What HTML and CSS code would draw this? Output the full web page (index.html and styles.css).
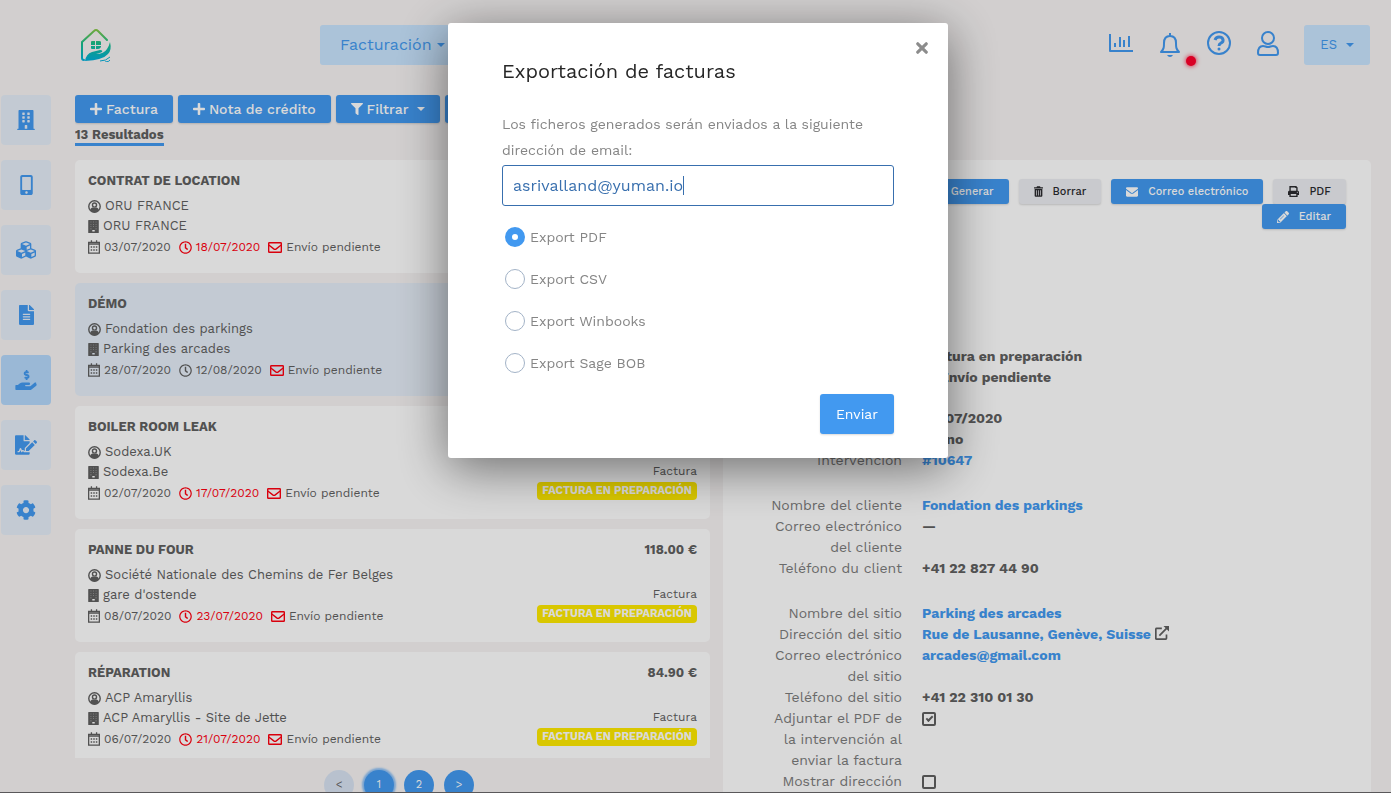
FILE: index.html
```html
<!DOCTYPE html>
<html lang="es">
<head>
  <meta charset="UTF-8" />
  <meta name="viewport" content="width=device-width, initial-scale=1.0" />
  <title>Facturación</title>
  <link rel="stylesheet" href="styles.css">
</head>
<body>
  <!-- icon sprite -->
  <svg class="sprite" aria-hidden="true">
    <symbol id="i-plus" viewBox="0 0 448 512"><path d="M416 208H272V64c0-17.67-14.33-32-32-32h-32c-17.67 0-32 14.33-32 32v144H32c-17.67 0-32 14.33-32 32v32c0 17.67 14.33 32 32 32h144v144c0 17.67 14.33 32 32 32h32c17.67 0 32-14.33 32-32V304h144c17.67 0 32-14.33 32-32v-32c0-17.67-14.33-32-32-32z"/></symbol>
    <symbol id="i-filter" viewBox="0 0 512 512"><path d="M487.976 0H24.028C2.71 0-8.047 25.866 7.058 40.971L192 225.941V432c0 7.831 3.821 15.17 10.237 19.662l80 55.98C298.02 518.69 320 507.493 320 487.98V225.941l184.947-184.97C520.021 25.896 509.338 0 487.976 0z"/></symbol>
    <symbol id="i-building" viewBox="0 0 448 512"><path d="M436 480h-20V24c0-13.255-10.745-24-24-24H56C42.745 0 32 10.745 32 24v456H12c-6.627 0-12 5.373-12 12v20h448v-20c0-6.627-5.373-12-12-12zM128 76c0-6.627 5.373-12 12-12h40c6.627 0 12 5.373 12 12v40c0 6.627-5.373 12-12 12h-40c-6.627 0-12-5.373-12-12V76zm0 96c0-6.627 5.373-12 12-12h40c6.627 0 12 5.373 12 12v40c0 6.627-5.373 12-12 12h-40c-6.627 0-12-5.373-12-12v-40zm52 148h-40c-6.627 0-12-5.373-12-12v-40c0-6.627 5.373-12 12-12h40c6.627 0 12 5.373 12 12v40c0 6.627-5.373 12-12 12zm76 160h-64v-84c0-6.627 5.373-12 12-12h40c6.627 0 12 5.373 12 12v84zm64-172c0 6.627-5.373 12-12 12h-40c-6.627 0-12-5.373-12-12v-40c0-6.627 5.373-12 12-12h40c6.627 0 12 5.373 12 12v40zm0-96c0 6.627-5.373 12-12 12h-40c-6.627 0-12-5.373-12-12v-40c0-6.627 5.373-12 12-12h40c6.627 0 12 5.373 12 12v40zm0-96c0 6.627-5.373 12-12 12h-40c-6.627 0-12-5.373-12-12V76c0-6.627 5.373-12 12-12h40c6.627 0 12 5.373 12 12v40z"/></symbol>
    <symbol id="i-mobile" viewBox="0 0 320 512"><path d="M272 0H48C21.5 0 0 21.5 0 48v416c0 26.5 21.5 48 48 48h224c26.5 0 48-21.5 48-48V48c0-26.5-21.5-48-48-48zM160 480c-17.7 0-32-14.3-32-32s14.3-32 32-32 32 14.3 32 32-14.3 32-32 32zm112-108c0 6.6-5.4 12-12 12H60c-6.6 0-12-5.4-12-12V60c0-6.6 5.4-12 12-12h200c6.6 0 12 5.4 12 12v312z"/></symbol>
    <symbol id="i-cubes" viewBox="0 0 512 512"><path d="M488.6 250.2L392 214V105.5c0-15-9.3-28.4-23.4-33.7l-100-37.5c-8.1-3.1-17.1-3.1-25.3 0l-100 37.5c-14.1 5.3-23.4 18.7-23.4 33.7V214l-96.6 36.2C9.3 255.5 0 268.9 0 283.9V394c0 13.6 7.7 26.1 19.9 32.2l100 50c10.1 5.1 22.1 5.1 32.2 0l103.9-52 103.9 52c10.1 5.1 22.1 5.1 32.2 0l100-50c12.2-6.1 19.9-18.6 19.9-32.2V283.9c0-15-9.3-28.4-23.4-33.7zM358 214.8l-85 31.9v-68.2l85-37v73.3zM154 104.1l102-38.2 102 38.2v.6l-102 41.4-102-41.4v-.6zm84 291.1l-85 42.5v-79.1l85-38.8v75.4zm0-112l-102 41.4-102-41.4v-.6l102-38.2 102 38.2v.6zm240 112l-85 42.5v-79.1l85-38.8v75.4zm0-112l-102 41.4-102-41.4v-.6l102-38.2 102 38.2v.6z"/></symbol>
    <symbol id="i-file" viewBox="0 0 384 512"><path d="M224 136V0H24C10.7 0 0 10.7 0 24v464c0 13.3 10.7 24 24 24h336c13.3 0 24-10.7 24-24V160H248c-13.2 0-24-10.8-24-24zm64 236c0 6.6-5.4 12-12 12H108c-6.6 0-12-5.4-12-12v-8c0-6.6 5.4-12 12-12h168c6.6 0 12 5.4 12 12v8zm0-64c0 6.6-5.4 12-12 12H108c-6.6 0-12-5.4-12-12v-8c0-6.6 5.4-12 12-12h168c6.6 0 12 5.4 12 12v8zm0-72v8c0 6.6-5.4 12-12 12H108c-6.6 0-12-5.4-12-12v-8c0-6.6 5.4-12 12-12h168c6.6 0 12 5.4 12 12zm96-114.1v6.1H256V0h6.1c6.4 0 12.5 2.5 17 7l97.9 98c4.5 4.5 7 10.6 7 16.9z"/></symbol>
    <symbol id="i-hand" viewBox="0 0 544 512"><path d="M257.6 144.3l50 14.3c3.6 1 6.1 4.4 6.1 8.1 0 4.6-3.8 8.4-8.4 8.4h-32.8c-3.6 0-7.1-.8-10.3-2.2-4.8-2.2-10.4-1.7-14.1 2l-17.5 17.5c-5.3 5.3-4.7 14.3 1.5 18.4 9.5 6.3 20.3 10.1 31.8 11.5V240c0 8.8 7.2 16 16 16h16c8.8 0 16-7.2 16-16v-17.6c30.3-3.6 53.3-31 49.3-63-2.9-23-20.7-41.3-42.9-47.7l-50-14.3c-3.6-1-6.1-4.4-6.1-8.1 0-4.6 3.8-8.4 8.4-8.4h32.8c3.6 0 7.1.8 10.3 2.2 4.8 2.2 10.4 1.7 14.1-2l17.5-17.5c5.3-5.3 4.7-14.3-1.5-18.4-9.5-6.3-20.3-10.1-31.8-11.5V16c0-8.8-7.2-16-16-16h-16c-8.8 0-16 7.2-16 16v17.6c-30.3 3.6-53.3 31-49.3 63 2.9 23 20.6 41.3 42.9 47.7z"/><path d="M533 328c-12-11-30-10-43 0l-91 73c-11 9-25 14-40 14H264c-9 0-16-7-16-16s7-16 16-16h78c16 0 31-11 34-27 3-20-12-37-32-37H184c-27 0-53 9-74 26l-47 38H16c-9 0-16 7-16 16v96c0 9 7 16 16 16h357c15 0 29-5 40-14l121-97c15-12 16-35-1-51z"/></symbol>
    <symbol id="i-sign" viewBox="0 0 576 512"><path d="M218.17 424.14c-2.95-5.92-8.09-6.52-10.17-6.52s-7.22.59-10.02 6.19l-7.67 15.34c-6.37 12.78-25.03 11.37-29.48-2.09L144 386.59l-10.61 31.88c-5.89 17.66-22.38 29.53-41 29.53H80c-8.84 0-16-7.16-16-16s7.16-16 16-16h12.39c4.83 0 9.11-3.08 10.64-7.66l18.19-54.64c3.3-9.81 12.44-16.41 22.78-16.41s19.48 6.59 22.77 16.41l13.88 41.64c19.75-16.19 54.06-9.7 66 14.16 1.89 3.78 5.49 5.95 9.36 6.26v-82.12l128-127.09V160H248c-13.2 0-24-10.8-24-24V0H24C10.7 0 0 10.7 0 24v464c0 13.3 10.7 24 24 24h336c13.3 0 24-10.7 24-24v-40l-128-.11c-16.12-.31-30.58-9.28-37.83-23.75zM384 121.9c0-6.3-2.5-12.4-7-16.9L279.1 7c-4.5-4.5-10.6-7-17-7H256v128h128v-6.1zm-96 225.06V416h68.99l161.68-162.78-67.88-67.88L288 346.96zm280.54-179.63l-31.87-31.87c-9.94-9.94-26.07-9.94-36.01 0l-27.25 27.25 67.88 67.88 27.25-27.25c9.95-9.94 9.95-26.07 0-36.01z"/></symbol>
    <symbol id="i-cog" viewBox="0 0 512 512"><path d="M487.4 315.7l-42.6-24.6c4.3-23.2 4.3-47 0-70.2l42.6-24.6c4.9-2.8 7.1-8.6 5.5-14-11.1-35.6-30-67.8-54.7-94.6-3.8-4.1-10-5.1-14.8-2.3L380.8 110c-17.9-15.4-38.5-27.3-60.8-35.1V25.8c0-5.6-3.9-10.5-9.4-11.7-36.7-8.2-74.3-7.8-109.2 0-5.5 1.2-9.4 6.1-9.4 11.7V75c-22.2 7.9-42.8 19.8-60.8 35.1L88.7 85.5c-4.9-2.8-11-1.9-14.8 2.3-24.7 26.7-43.6 58.9-54.7 94.6-1.7 5.4.6 11.2 5.5 14L67.3 221c-4.3 23.2-4.3 47 0 70.2l-42.6 24.6c-4.9 2.8-7.1 8.6-5.5 14 11.1 35.6 30 67.8 54.7 94.6 3.8 4.1 10 5.1 14.8 2.3l42.6-24.6c17.9 15.4 38.5 27.3 60.8 35.1v49.2c0 5.6 3.9 10.5 9.4 11.7 36.7 8.2 74.3 7.8 109.2 0 5.5-1.2 9.4-6.1 9.4-11.7v-49.2c22.2-7.9 42.8-19.8 60.8-35.1l42.6 24.6c4.9 2.8 11 1.9 14.8-2.3 24.7-26.7 43.6-58.9 54.7-94.6 1.5-5.5-.7-11.3-5.6-14.1zM256 336c-44.1 0-80-35.9-80-80s35.9-80 80-80 80 35.9 80 80-35.9 80-80 80z"/></symbol>
    <symbol id="i-client" viewBox="0 0 512 512"><g fill="none" stroke="currentColor" stroke-width="56"><circle cx="256" cy="256" r="225"/><circle cx="256" cy="200" r="80"/></g><path d="M90 390c20-75 70-90 104-90 20 0 30 12 62 12s42-12 62-12c34 0 84 15 104 90-90 120-242 120-332 0z"/></symbol>
    <symbol id="i-site" viewBox="0 0 416 512"><path fill-rule="evenodd" d="M20 0h376q20 0 20 20v472q0 20-20 20H20q-20 0-20-20V20Q0 0 20 0zM96 66v24h24V66zm100 0v24h24V66zm100 0v24h24V66zM96 156v24h24v-24zm100 0v24h24v-24zm100 0v24h24v-24zM96 246v24h24v-24zm100 0v24h24v-24zm100 0v24h24v-24zM96 336v24h24v-24zm200 0v24h24v-24zM160 390v64h96v-64z"/></symbol>
    <symbol id="i-calendar" viewBox="0 0 448 512"><path fill="none" stroke="currentColor" stroke-width="48" d="M24 88h400v400H24zM24 150h400M128 0v88M320 0v88"/><path d="M100 226h56v56h-56zm96 0h56v56h-56zm96 0h56v56h-56zM100 340h56v56h-56zm96 0h56v56h-56zm96 0h56v56h-56z"/></symbol>
    <symbol id="i-clock" viewBox="0 0 512 512"><path d="M256 8C119 8 8 119 8 256s111 248 248 248 248-111 248-248S393 8 256 8zm0 448c-110.500 0-200-89.500-200-200S145.500 56 256 56s200 89.500 200 200-89.500 200-200 200zm61.800-104.400l-84.900-61.700c-3.100-2.300-4.900-5.900-4.900-9.700V116c0-6.600 5.400-12 12-12h32c6.600 0 12 5.400 12 12v141.700l66.800 48.600c5.400 3.900 6.500 11.400 2.600 16.800L334.600 349c-3.900 5.300-11.400 6.500-16.800 2.600z"/></symbol>
    <symbol id="i-mail" viewBox="0 0 512 400"><g fill="none" stroke="currentColor" stroke-width="50"><rect x="25" y="25" width="462" height="350" rx="24"/><path d="M30 110l180 140q46 34 92 0l180-140"/></g></symbol>
    <symbol id="i-mail-solid" viewBox="0 0 512 400"><path d="M48 0h416c26 0 48 21 48 48v18L286 230c-18 14-42 14-60 0L0 66V48C0 21 22 0 48 0zM0 112l200 148c34 26 78 26 112 0l200-148v240c0 27-22 48-48 48H48c-26 0-48-21-48-48z"/></symbol>
    <symbol id="i-trash" viewBox="0 0 448 512"><path fill-rule="evenodd" d="M150 0h148l26 40h108q16 0 16 16v48H0V56q0-16 16-16h108zM32 136h384v328q0 48-48 48H80q-48 0-48-48zm76 56v260h36V192zm98 0v260h36V192zm98 0v260h36V192z"/></symbol>
    <symbol id="i-print" viewBox="0 0 512 512"><path fill-rule="evenodd" d="M64 0h320l64 64v160q64 0 64 64v128h-64v96H64v-96H0V288q0-64 64-64zm64 64v160h256V96h-48V64zm0 304v80h256v-80zM432 272a24 24 0 1 0 1 0z"/></symbol>
    <symbol id="i-pencil" viewBox="0 0 512 512"><path fill-rule="evenodd" d="M497.900 142.100l-46.100 46.100c-4.700 4.700-12.300 4.700-17 0l-111-111c-4.700-4.700-4.700-12.300 0-17l46.100-46.100c18.700-18.700 49.100-18.700 67.900 0l60.100 60.100c18.800 18.700 18.800 49.100 0 67.900zM284.200 99.800L21.600 362.400.4 483.900c-2.900 16.400 11.400 30.600 27.800 27.800l121.500-21.300 262.600-262.600c4.700-4.700 4.700-12.300 0-17l-111-111c-4.800-4.700-12.400-4.700-17.100 0zM130 345l154-154 16 16-154 154zM88 424h48v36.300l-64.500 11.300-31.100-31.100L51.700 376H88v48z"/></symbol>
    <symbol id="i-external" viewBox="0 0 512 512"><path fill="none" stroke="currentColor" stroke-width="62" d="M250 90H60q-30 0-30 30v330q0 30 30 30h330q30 0 30-30V310M160 350L440 70"/><path d="M310 0h202v202z"/></symbol>
    <symbol id="i-close" viewBox="0 0 352 352"><path fill="none" stroke="currentColor" stroke-width="92" stroke-linecap="round" d="M52 52l248 248M300 52L52 300"/></symbol>
  </svg>

  <div class="app">
    <header class="topbar">
      <a class="logo" href="#" aria-label="Inicio">
        <svg class="line" viewBox="0 0 32 34" width="32" height="34">
          <defs>
            <linearGradient id="roof" x1="0" y1="0" x2="0" y2="34" gradientUnits="userSpaceOnUse">
              <stop offset="0" stop-color="#93c83e"/>
              <stop offset=".45" stop-color="#18c08c"/>
              <stop offset="1" stop-color="#00aee0"/>
            </linearGradient>
          </defs>
          <path stroke="url(#roof)" stroke-width="2" stroke-linecap="round" stroke-linejoin="round" d="M4 32q-2 0-2-2V14L14 3q2-2 4 0l9 9"/>
          <path fill="url(#roof)" d="M11 14q0-1 1-1h3v4h-4zM16 13h3q2 0 2 1v3h-5zM11 18h4v3h-3q-1 0-1-1zM16 18h5v1q-1 2-3 2h-2z"/>
          <path fill="url(#roof)" d="M5 33q1-7 7-9l8-2q3 0 2 2-2 1-6 2 8 0 11-5 2-3 3-7 2 8-2 12-5 6-23 7z"/>
          <path stroke="url(#roof)" stroke-width="1" d="M20 33q6 0 10-4M25 34q4 0 5-2"/>
        </svg>
      </a>
      <div class="select module-select">
        <select aria-label="Módulo"><option>Facturación</option></select>
      </div>
      <nav class="top-actions">
        <a href="#" aria-label="Estadísticas"><svg class="line" viewBox="0 0 24 20" width="24" height="20" stroke="currentColor" stroke-width="2"><path d="M1 1v17h23" stroke-linejoin="round"/><path d="M6 14v-4M11 14V4M15 14V7M20 14V3"/></svg></a>
        <a class="bell" href="#" aria-label="Notificaciones"><svg class="line" viewBox="0 0 22 26" width="22" height="26" stroke="currentColor" stroke-width="2"><path d="M2 20h18c-3-3-3-5-3-9 0-4-2-7-6-7s-6 3-6 7c0 4 0 6-3 9zM11 4V1" stroke-linejoin="round"/><path fill="currentColor" stroke="none" d="M8 23h6q-1 2-3 2t-3-2z"/></svg><span class="alert-dot"></span></a>
        <a href="#" aria-label="Ayuda"><svg class="line" viewBox="0 0 24 24" width="24" height="24" stroke="currentColor" stroke-width="2"><circle cx="12" cy="12" r="11"/><path stroke-width="3" d="M8 9q1-3 4-3c5 0 5 5 2 6q-2 1-2 3"/><circle cx="12" cy="18" r="1.500" fill="currentColor" stroke="none"/></svg></a>
        <a href="#" aria-label="Mi cuenta"><svg class="line" viewBox="0 0 22 25" width="22" height="25" stroke="currentColor" stroke-width="2"><circle cx="11" cy="7" r="6"/><path stroke-linejoin="round" d="M1 22c0-5 2-7 5-7 2 0 3 1 5 1s3-1 5-1c3 0 5 2 5 7q0 2-2 2H3q-2 0-2-2z"/></svg></a>
      </nav>
      <div class="select lang-select">
        <select aria-label="Idioma"><option>ES</option></select>
      </div>
    </header>

    <nav class="sidebar">
      <a href="#" aria-label="Sitios"><svg width="18" height="20"><use href="#i-building"/></svg></a>
      <a href="#" aria-label="Equipos"><svg width="13" height="20"><use href="#i-mobile"/></svg></a>
      <a href="#" aria-label="Productos"><svg width="20" height="20"><use href="#i-cubes"/></svg></a>
      <a href="#" aria-label="Intervenciones"><svg width="15" height="20"><use href="#i-file"/></svg></a>
      <a class="active" href="#" aria-label="Facturación"><svg width="22" height="20"><use href="#i-hand"/></svg></a>
      <a href="#" aria-label="Contratos"><svg width="22" height="20"><use href="#i-sign"/></svg></a>
      <a href="#" aria-label="Ajustes"><svg width="20" height="20"><use href="#i-cog"/></svg></a>
    </nav>

    <main class="content">
      <section class="list">
        <div class="toolbar">
          <button class="btn" type="button"><svg width="12" height="14"><use href="#i-plus"/></svg>Factura</button>
          <button class="btn" type="button"><svg width="12" height="14"><use href="#i-plus"/></svg>Nota de crédito</button>
          <button class="btn caret" type="button"><svg width="12" height="12"><use href="#i-filter"/></svg>Filtrar</button>
          <button class="btn" type="button">Exportar</button>
        </div>
        <a class="count" href="#">13 Resultados</a>

        <div class="cards">
          <article class="card">
            <div class="card-main">
              <h2>CONTRAT DE LOCATION</h2>
              <p><svg width="13" height="13"><use href="#i-client"/></svg>ORU FRANCE</p>
              <p><svg width="11" height="13"><use href="#i-site"/></svg>ORU FRANCE</p>
              <p class="dates"><span><svg width="12" height="14"><use href="#i-calendar"/></svg>03/07/2020</span><span class="late"><svg width="13" height="13"><use href="#i-clock"/></svg>18/07/2020</span><span class="sending"><svg width="14" height="11"><use href="#i-mail"/></svg>Envío pendiente</span></p>
            </div>
          </article>

          <article class="card selected">
            <div class="card-main">
              <h2>DÉMO</h2>
              <p><svg width="13" height="13"><use href="#i-client"/></svg>Fondation des parkings</p>
              <p><svg width="11" height="13"><use href="#i-site"/></svg>Parking des arcades</p>
              <p class="dates"><span><svg width="12" height="14"><use href="#i-calendar"/></svg>28/07/2020</span><span><svg width="13" height="13"><use href="#i-clock"/></svg>12/08/2020</span><span class="sending"><svg width="14" height="11"><use href="#i-mail"/></svg>Envío pendiente</span></p>
            </div>
          </article>

          <article class="card">
            <div class="card-main">
              <h2>BOILER ROOM LEAK</h2>
              <p><svg width="13" height="13"><use href="#i-client"/></svg>Sodexa.UK</p>
              <p><svg width="11" height="13"><use href="#i-site"/></svg>Sodexa.Be</p>
              <p class="dates"><span><svg width="12" height="14"><use href="#i-calendar"/></svg>02/07/2020</span><span class="late"><svg width="13" height="13"><use href="#i-clock"/></svg>17/07/2020</span><span class="sending"><svg width="14" height="11"><use href="#i-mail"/></svg>Envío pendiente</span></p>
            </div>
            <div class="card-side">
              <span class="kind">Factura</span>
              <span class="badge">FACTURA EN PREPARACIÓN</span>
            </div>
          </article>

          <article class="card">
            <div class="card-main">
              <h2>PANNE DU FOUR</h2>
              <p><svg width="13" height="13"><use href="#i-client"/></svg>Société Nationale des Chemins de Fer Belges</p>
              <p><svg width="11" height="13"><use href="#i-site"/></svg>gare d'ostende</p>
              <p class="dates"><span><svg width="12" height="14"><use href="#i-calendar"/></svg>08/07/2020</span><span class="late"><svg width="13" height="13"><use href="#i-clock"/></svg>23/07/2020</span><span class="sending"><svg width="14" height="11"><use href="#i-mail"/></svg>Envío pendiente</span></p>
            </div>
            <div class="card-side">
              <strong>118.00 €</strong>
              <span class="kind">Factura</span>
              <span class="badge">FACTURA EN PREPARACIÓN</span>
            </div>
          </article>

          <article class="card">
            <div class="card-main">
              <h2>RÉPARATION</h2>
              <p><svg width="13" height="13"><use href="#i-client"/></svg>ACP Amaryllis</p>
              <p><svg width="11" height="13"><use href="#i-site"/></svg>ACP Amaryllis - Site de Jette</p>
              <p class="dates"><span><svg width="12" height="14"><use href="#i-calendar"/></svg>06/07/2020</span><span class="late"><svg width="13" height="13"><use href="#i-clock"/></svg>21/07/2020</span><span class="sending"><svg width="14" height="11"><use href="#i-mail"/></svg>Envío pendiente</span></p>
            </div>
            <div class="card-side">
              <strong>84.90 €</strong>
              <span class="kind">Factura</span>
              <span class="badge">FACTURA EN PREPARACIÓN</span>
            </div>
          </article>
        </div>

        <nav class="pager" aria-label="Páginas">
          <button type="button" disabled>&lt;</button>
          <button class="current" type="button">1</button>
          <button type="button">2</button>
          <button type="button">&gt;</button>
        </nav>
      </section>

      <section class="detail">
        <div class="detail-actions">
          <button class="btn small" type="button"><svg width="11" height="11"><use href="#i-plus"/></svg>Duplicar</button>
          <button class="btn small" type="button"><svg width="11" height="11"><use href="#i-file"/></svg>Generar</button>
          <button class="btn small light" type="button"><svg width="9" height="11"><use href="#i-trash"/></svg>Borrar</button>
          <button class="btn small" type="button"><svg width="12" height="10"><use href="#i-mail-solid"/></svg>Correo electrónico</button>
          <button class="btn small light" type="button"><svg width="11" height="11"><use href="#i-print"/></svg>PDF</button>
          <button class="btn small" type="button"><svg width="12" height="12"><use href="#i-pencil"/></svg>Editar</button>
        </div>

        <dl class="status">
          <dt>Estado</dt><dd>Factura en preparación</dd>
          <dt>Envío</dt><dd><svg width="14" height="11"><use href="#i-mail"/></svg> Envío pendiente</dd>
        </dl>
        <dl>
          <dt>Fecha</dt><dd>28/07/2020</dd>
          <dt>Autor</dt><dd>Bruno</dd>
          <dt>Intervención</dt><dd><a href="#">#10647</a></dd>
        </dl>
        <dl>
          <dt>Nombre del cliente</dt><dd><a href="#">Fondation des parkings</a></dd>
          <dt>Correo electrónico del cliente</dt><dd>—</dd>
          <dt>Teléfono du client</dt><dd>+41 22 827 44 90</dd>
        </dl>
        <dl>
          <dt>Nombre del sitio</dt><dd><a href="#">Parking des arcades</a></dd>
          <dt>Dirección del sitio</dt><dd><a href="#">Rue de Lausanne, Genève, Suisse</a> <svg width="14" height="14"><use href="#i-external"/></svg></dd>
          <dt>Correo electrónico del sitio</dt><dd><a href="#">arcades@gmail.com</a></dd>
          <dt>Teléfono del sitio</dt><dd>+41 22 310 01 30</dd>
          <dt><label for="attachPdf">Adjuntar el PDF de la intervención al enviar la factura</label></dt><dd><input type="checkbox" id="attachPdf" checked></dd>
          <dt><label for="showAddress">Mostrar dirección</label></dt><dd><input type="checkbox" id="showAddress"></dd>
        </dl>
      </section>
    </main>
  </div>

  <div class="overlay">
    <form class="modal" role="dialog" aria-modal="true" aria-labelledby="modalTitle">
      <button class="close" type="button" aria-label="Cerrar"><svg width="12" height="12"><use href="#i-close"/></svg></button>
      <h1 id="modalTitle">Exportación de facturas</h1>
      <label class="intro" for="email">Los ficheros generados serán enviados a la siguiente dirección de email:</label>
      <div class="field">
        <input type="text" id="email" value="asrivalland@yuman.io">
        <span class="cursor"></span>
      </div>
      <div class="formats">
        <label><input type="radio" name="format" checked>Export PDF</label>
        <label><input type="radio" name="format">Export CSV</label>
        <label><input type="radio" name="format">Export Winbooks</label>
        <label><input type="radio" name="format">Export Sage BOB</label>
      </div>
      <button class="btn submit" type="submit">Enviar</button>
    </form>
  </div>
</body>
</html>
```
FILE: styles.css
```css
* {
  box-sizing: border-box;
}

body {
  margin: 0;
  font-family: "Work Sans", Inter, sans-serif;
  font-size: 14px;
  line-height: 20px;
  color: #606060;
  background: #f7f4f4;
}

h1,
h2,
p,
dl,
dd {
  margin: 0;
}

a {
  color: #4299f0;
  text-decoration: none;
}

button,
input,
select {
  font: inherit;
  color: inherit;
}

svg {
  fill: currentColor;
  flex: none;
}

svg.line {
  fill: none;
}

.sprite {
  display: none;
}

.app {
  display: grid;
  grid-template: 90px 1fr / 75px 1fr;
  height: 100vh;
  overflow: hidden;
  border-bottom: 1px solid #6a686a;
}

/* top bar */

.topbar {
  grid-column: 1 / -1;
  display: flex;
  align-items: flex-start;
  padding: 25px 21px 0 80px;
}

.logo {
  flex: 0 0 240px;
  padding-top: 3px;
}

.select {
  display: flex;
  align-items: center;
  gap: 5px;
  height: 40px;
  border-radius: 3px;
  background: #c9e5ff;
  color: #4299f0;
}

.select select {
  appearance: none;
  field-sizing: content;
  padding: 0;
  border: 0;
  background: none;
}

.select::after,
.caret::after {
  content: "";
  border: 4px solid transparent;
  border-top-color: currentColor;
  border-bottom: 0;
}

.module-select {
  width: 240px;
  padding-left: 20px;
  font-size: 16px;
}

.lang-select {
  gap: 9px;
  padding: 0 16px;
  font-size: 13px;
}

.top-actions {
  display: flex;
  align-items: center;
  gap: 26px;
  height: 36px;
  margin-left: auto;
  margin-right: 25px;
}

.top-actions a {
  display: flex;
}

.bell {
  position: relative;
  padding-top: 4px;
}

.alert-dot {
  position: absolute;
  right: -15px;
  bottom: -8px;
  width: 10px;
  height: 10px;
  border-radius: 50%;
  background: #ff002b;
  box-shadow: 0 0 5px #ff002b;
}

/* sidebar */

.sidebar {
  display: flex;
  flex-direction: column;
  gap: 15px;
  padding: 5px 1px;
}

.sidebar a {
  display: flex;
  align-items: center;
  justify-content: center;
  width: 50px;
  height: 50px;
  border-radius: 4px;
  background: #e6eef8;
}

.sidebar a.active {
  background: #b5d9fc;
}

.content {
  display: grid;
  grid-template-columns: 49fr 50fr;
  gap: 13px;
  min-height: 0;
  padding-right: 20px;
}

/* buttons */

.btn {
  display: flex;
  align-items: center;
  gap: 4px;
  height: 28px;
  padding: 0 15px;
  border: 0;
  border-radius: 3px;
  background: #4299f0;
  box-shadow: 0 1px 2px rgba(0, 0, 0, .15);
  color: #fff;
  white-space: nowrap;
}

.btn.caret::after {
  margin-left: 5px;
}

.btn.small {
  gap: 10px;
  height: 25px;
  font-size: 11px;
  font-weight: 500;
}

.btn.light {
  background: #edeef2;
  color: #2b2b2f;
}

/* invoice list */

.list {
  display: flex;
  flex-direction: column;
  align-items: flex-start;
  min-width: 0;
  min-height: 0;
  overflow: hidden;
}

.toolbar {
  display: flex;
  gap: 5px;
  padding-top: 5px;
  font-weight: 500;
}

.count {
  margin: 3px 0 14px;
  border-bottom: 3px solid #4299f0;
  color: #606060;
  font-size: 13px;
  font-weight: 700;
  line-height: 17px;
}

.toolbar,
.count {
  flex: none;
}

.cards {
  flex: 1;
  display: flex;
  flex-direction: column;
  gap: 10px;
  width: 100%;
  min-height: 0;
  overflow: hidden;
}

.card {
  flex: none;
  display: flex;
  justify-content: space-between;
  padding: 11px 13px 16px;
  border-radius: 5px;
  background: #fff;
  font-size: 13px;
}

.card.selected {
  background: #e6eef8;
}

.card h2 {
  margin-bottom: 5px;
  font-size: 13px;
  line-height: 20px;
}

.card p,
.card p span {
  display: flex;
  align-items: center;
  gap: 4px;
}

.card .dates {
  gap: 8px;
  margin-top: 1px;
  font-size: 12px;
}

.late,
.sending svg {
  color: #ff0010;
}

.card-side {
  display: flex;
  flex-direction: column;
  align-items: flex-end;
}

.kind {
  margin-top: auto;
  font-size: 12px;
}

.badge {
  margin: 1px 0 3px;
  padding: 0 5px;
  border-radius: 4px;
  background: #ffea00;
  color: #fff;
  font-size: 11px;
  font-weight: 700;
  line-height: 18px;
}

.pager {
  flex: 0 0 34px;
  display: flex;
  align-items: flex-start;
  align-self: center;
  gap: 10px;
  min-height: 0;
  padding: 12px 0 0 13px;
  font-size: 11px;
}

.pager button {
  width: 30px;
  height: 30px;
  padding: 0;
  border: 0;
  border-radius: 50%;
  background: #4299f0;
  color: #fff;
}

.pager button:disabled {
  background: #d9e3f2;
  color: #606060;
}

.pager .current {
  box-shadow: 0 0 2px 2px #8cbff5;
}

/* invoice detail */

.detail {
  min-width: 0;
  margin-top: 70px;
  padding: 19px 25px 0 43px;
  border-radius: 5px 5px 0 0;
  background: #fff;
  overflow: hidden;
}

.detail-actions {
  display: flex;
  flex-wrap: wrap;
  justify-content: flex-end;
  column-gap: 10px;
  margin-bottom: 117px;
}

.detail dl {
  display: grid;
  grid-template-columns: 136px 1fr;
  column-gap: 20px;
  margin-bottom: 24px;
  line-height: 21px;
}

.detail .status {
  margin-bottom: 20px;
}

.detail dt {
  color: #7c7c7c;
  text-align: right;
}

.detail dd {
  font-weight: 700;
}

.detail dd svg {
  vertical-align: -1px;
}

.detail input {
  appearance: none;
  display: grid;
  place-items: center;
  width: 14px;
  height: 14px;
  margin: 4px 0 0;
  border: 2px solid #606060;
  border-radius: 2px;
}

.detail input:checked::before {
  content: "";
  width: 5px;
  height: 2px;
  margin-bottom: 2px;
  border: solid #606060;
  border-width: 0 0 2px 2px;
  transform: rotate(-45deg);
}

/* export modal */

.overlay {
  position: fixed;
  inset: 0;
  padding: 23px 0 0 5px;
  background: rgba(0, 0, 0, .15);
}

.modal {
  position: relative;
  display: flex;
  flex-direction: column;
  max-width: 500px;
  margin: 0 auto;
  padding: 35px 54px 24px;
  border-radius: 3px;
  background: #fff;
  box-shadow: 0 10px 50px rgba(0, 0, 0, .5);
  color: #858585;
}

.modal h1 {
  margin-bottom: 27px;
  color: #262626;
  font-size: 20px;
  font-weight: 400;
  line-height: 26px;
}

.close {
  position: absolute;
  top: 13px;
  right: 14px;
  display: grid;
  place-items: center;
  width: 24px;
  height: 24px;
  padding: 0;
  border: 0;
  background: none;
  color: #8c8c8c;
}

.intro {
  margin-bottom: 2px;
  line-height: 26px;
}

.field {
  display: flex;
  align-items: center;
  height: 41px;
  padding: 0 10px;
  border: 1px solid #386fae;
  border-radius: 3px;
  color: #386fae;
  font-size: 16px;
}

.field input {
  field-sizing: content;
  padding: 0;
  border: 0;
  outline: 0;
  background: none;
}

.cursor {
  width: 1px;
  height: 19px;
  background: currentColor;
}

.formats {
  margin: 10px 0;
}

.formats label {
  display: flex;
  align-items: center;
  gap: 5px;
  height: 42px;
}

.formats input {
  appearance: none;
  width: 20px;
  height: 20px;
  margin: 0 0 0 3px;
  border: 1px solid #a3b3c7;
  border-radius: 50%;
}

.formats input:checked {
  border: 7px solid #4299f0;
}

.submit {
  align-self: flex-end;
  height: 40px;
  padding: 0 16px;
}
```
